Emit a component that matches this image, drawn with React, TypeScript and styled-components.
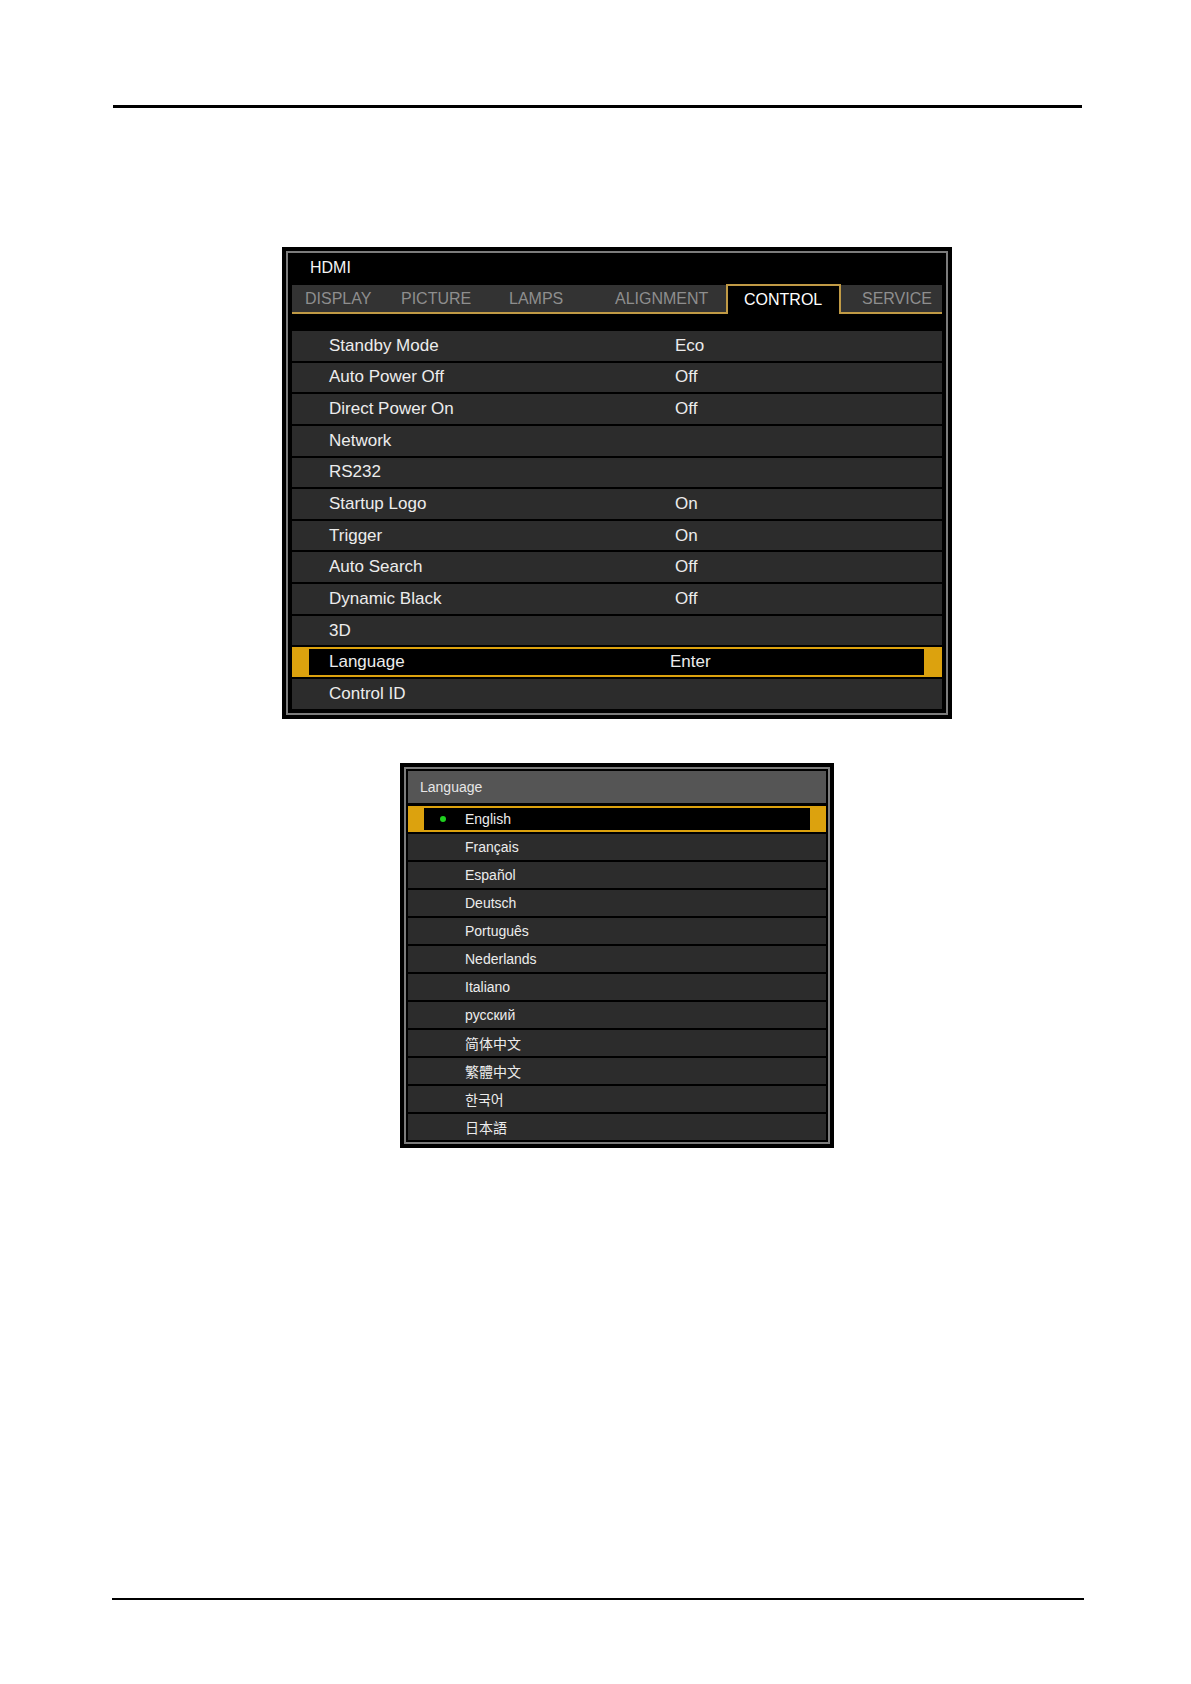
import React from "react";
import styled, { createGlobalStyle } from "styled-components";

const GlobalStyle = createGlobalStyle`
  html, body {
    margin: 0;
    padding: 0;
    background: #ffffff;
  }
  body {
    font-family: "Liberation Sans", Arial, sans-serif;
  }
`;

const gold = "#dca20e";
const tabGold = "#c09a45";

const Page = styled.div`
  position: relative;
  width: 1191px;
  min-height: 1684px;
  background: #ffffff;
  overflow: hidden;
`;

const Rule = styled.div<{ $left: number; $width: number; $thick: number; $top: number }>`
  margin-left: ${(p) => p.$left}px;
  margin-top: ${(p) => p.$top}px;
  width: ${(p) => p.$width}px;
  height: ${(p) => p.$thick}px;
  background: #000;
`;

const Figure = styled.div`
  margin-left: 282px;
  margin-top: 139px;
  width: 670px;
  display: flex;
  flex-direction: column;
  align-items: center;
  gap: 44px;
`;

const Bezel = styled.div<{ $width: number }>`
  width: ${(p) => p.$width}px;
  box-sizing: border-box;
  border: 4px solid #000;
  background: #000;
`;

const Frame = styled.div<{ $pad: number }>`
  border: 2px solid #7c7c7c;
  background: #000;
  padding: ${(p) => p.$pad}px;
  display: flex;
  flex-direction: column;
`;

const Source = styled.div`
  height: 28px;
  display: flex;
  align-items: center;
  padding-left: 18px;
  padding-bottom: 6px;
  box-sizing: border-box;
  color: #f4f4f4;
  font-size: 16px;
`;

const TabBar = styled.div`
  display: flex;
  height: 27px;
  background: #333333;
  border-bottom: 2px solid ${tabGold};
`;

const Tab = styled.div<{ $width: number; $pad: number; $active?: boolean }>`
  width: ${(p) => p.$width}px;
  box-sizing: border-box;
  padding-left: ${(p) => p.$pad - (p.$active ? 2 : 0)}px;
  display: flex;
  align-items: center;
  font-size: 16px;
  color: ${(p) => (p.$active ? "#ffffff" : "#8e8e8e")};
  background: ${(p) => (p.$active ? "#000" : "transparent")};
  border: ${(p) => (p.$active ? `2px solid ${tabGold}` : "none")};
  border-bottom: none;
  height: ${(p) => (p.$active ? "30px" : "27px")};
  margin-top: ${(p) => (p.$active ? "-1px" : "0")};
  margin-bottom: ${(p) => (p.$active ? "-2px" : "0")};
  position: relative;
`;

const MenuList = styled.div`
  margin-top: 17px;
  display: grid;
  grid-auto-rows: 29.65px;
  gap: 2px;
`;

const MenuRow = styled.div<{ $active?: boolean }>`
  background: ${(p) => (p.$active ? gold : "#2c2c2c")};
  padding: ${(p) => (p.$active ? "2px 18px 2px 17px" : "0")};
  display: flex;
`;

const MenuInner = styled.div<{ $active?: boolean }>`
  flex: 1;
  background: ${(p) => (p.$active ? "#000" : "transparent")};
  display: grid;
  grid-template-columns: ${(p) => (p.$active ? "361px" : "383px")} 1fr;
  align-items: center;
  font-size: 17px;
  color: #ececec;
`;

const MenuLabel = styled.span<{ $active?: boolean }>`
  padding-left: ${(p) => (p.$active ? "20px" : "37px")};
  white-space: nowrap;
`;

const MenuValue = styled.span`
  white-space: nowrap;
`;

const LangHeader = styled.div`
  height: 32px;
  background: #555555;
  display: flex;
  align-items: center;
  padding-left: 12px;
  color: #e6e6e6;
  font-size: 14px;
`;

const LangList = styled.div`
  margin-top: 3px;
  display: grid;
  grid-auto-rows: 26px;
  gap: 2px;
`;

const LangRow = styled.div<{ $active?: boolean }>`
  background: ${(p) => (p.$active ? gold : "#2c2c2c")};
  padding: ${(p) => (p.$active ? "2px 16px" : "0")};
  display: flex;
`;

const LangInner = styled.div<{ $active?: boolean }>`
  flex: 1;
  background: ${(p) => (p.$active ? "#000" : "transparent")};
  display: flex;
  align-items: center;
  padding-left: ${(p) => (p.$active ? "16px" : "32px")};
  font-size: 14px;
  color: #ececec;
  font-family: "Liberation Sans", "Noto Sans CJK SC", "Noto Sans CJK KR", sans-serif;
`;

const Dot = styled.span<{ $on: boolean }>`
  width: 6px;
  height: 6px;
  border-radius: 50%;
  margin-right: 19px;
  background: ${(p) => (p.$on ? "#1fd01f" : "transparent")};
`;

const tabs = [
  { name: "DISPLAY", width: 93, pad: 13 },
  { name: "PICTURE", width: 100, pad: 16 },
  { name: "LAMPS", width: 110, pad: 24 },
  { name: "ALIGNMENT", width: 131, pad: 20 },
  { name: "CONTROL", width: 115, pad: 18, active: true },
  { name: "SERVICE", width: 101, pad: 21 },
];

const settings: [string, string][] = [
  ["Standby Mode", "Eco"],
  ["Auto Power Off", "Off"],
  ["Direct Power On", "Off"],
  ["Network", ""],
  ["RS232", ""],
  ["Startup Logo", "On"],
  ["Trigger", "On"],
  ["Auto Search", "Off"],
  ["Dynamic Black", "Off"],
  ["3D", ""],
  ["Language", "Enter"],
  ["Control ID", ""],
];

const languages = [
  "English",
  "Français",
  "Español",
  "Deutsch",
  "Português",
  "Nederlands",
  "Italiano",
  "русский",
  "简体中文",
  "繁體中文",
  "한국어",
  "日本語",
];

function App() {
  return (
    <Page>
      <GlobalStyle />
      <Rule $left={113} $width={969} $thick={3} $top={105} />
      <Figure>
        {/* control menu */}
        <Bezel $width={670}>
          <Frame $pad={4}>
            <Source>HDMI</Source>
            <TabBar>
              {tabs.map((t) => (
                <Tab key={t.name} $width={t.width} $pad={t.pad} $active={t.active}>
                  {t.name}
                </Tab>
              ))}
            </TabBar>
            <MenuList>
              {settings.map(([label, value]) => {
                const active = label === "Language";
                return (
                  <MenuRow key={label} $active={active}>
                    <MenuInner $active={active}>
                      <MenuLabel $active={active}>{label}</MenuLabel>
                      <MenuValue>{value}</MenuValue>
                    </MenuInner>
                  </MenuRow>
                );
              })}
            </MenuList>
          </Frame>
        </Bezel>
        {/* language submenu */}
        <Bezel $width={434}>
          <Frame $pad={2}>
            <LangHeader>Language</LangHeader>
            <LangList>
              {languages.map((lang, i) => (
                <LangRow key={lang} $active={i === 0}>
                  <LangInner $active={i === 0}>
                    <Dot $on={i === 0} />
                    {lang}
                  </LangInner>
                </LangRow>
              ))}
            </LangList>
          </Frame>
        </Bezel>
      </Figure>
      <Rule $left={112} $width={972} $thick={2} $top={450} />
    </Page>
  );
}

export default App;
